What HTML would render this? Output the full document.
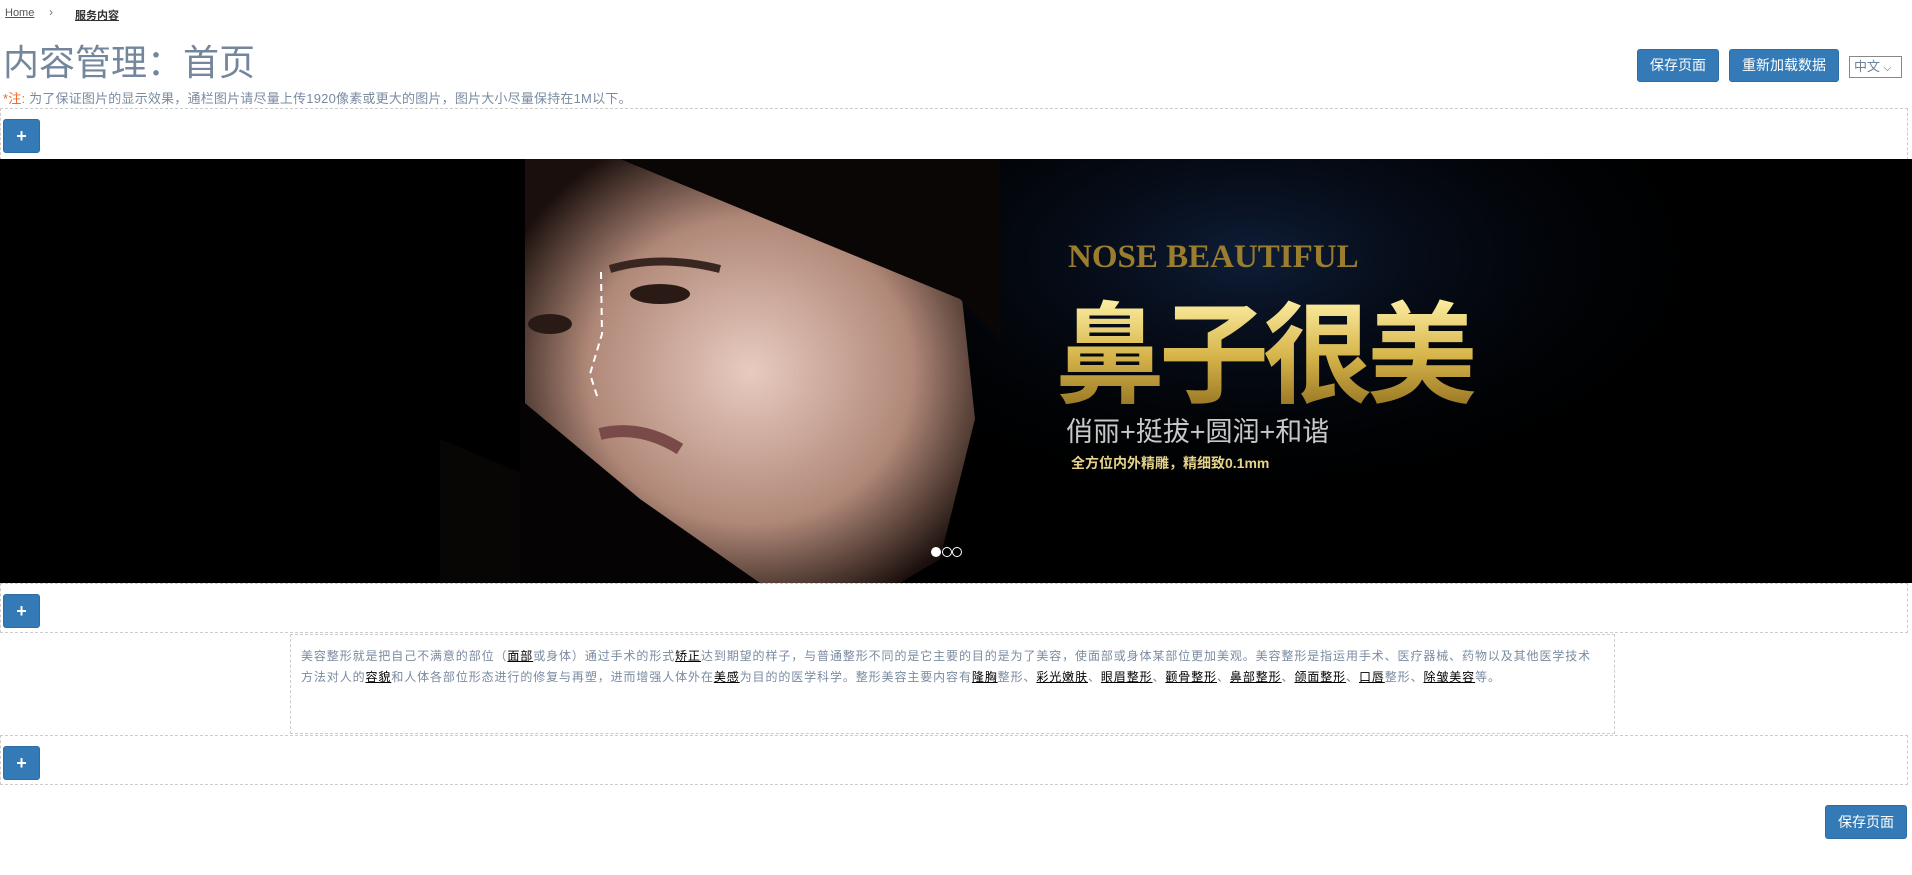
<!DOCTYPE html>
<html><head><meta charset="utf-8"><style>
*{box-sizing:border-box;margin:0;padding:0}
body{width:1912px;height:875px;background:#fff;font-family:"Liberation Sans","Noto Sans CJK SC",sans-serif;position:relative;overflow:hidden}
.a{position:absolute}
.btn{position:absolute;background:#337ab7;border:1px solid #2e6da4;border-radius:3px;color:#fff;font-size:14px;text-align:center}
.plus{width:37px;height:34px;line-height:32px;font-size:18px;font-weight:bold}
.sec{position:absolute;left:0;width:1908px;border:1px dashed #ccc}
.txt{font-size:12px;color:#7a8ba0;line-height:21px;letter-spacing:0.9px;white-space:nowrap}
.txt u{color:#000}
</style></head><body>
<div class="a" style="left:5px;top:7px;font-size:11px;color:#555"><u>Home</u></div>
<div class="a" style="left:49px;top:5px;font-size:12px;color:#777">›</div>
<div class="a" style="left:75px;top:7px;font-size:11px;color:#333;font-weight:bold"><u>服务内容</u></div>
<div class="a" style="left:3px;top:39px;font-size:36px;color:#73869c;line-height:48px">内容管理：首页</div>
<div class="a" style="left:3px;top:88px;font-size:13px;color:#7a8ba0;letter-spacing:0.2px"><span style="color:#f36a21">*注:</span> 为了保证图片的显示效果，通栏图片请尽量上传1920像素或更大的图片，图片大小尽量保持在1M以下。</div>
<div class="btn" style="left:1637px;top:49px;width:82px;height:33px;line-height:31px">保存页面</div>
<div class="btn" style="left:1729px;top:49px;width:110px;height:33px;line-height:31px">重新加载数据</div>
<div class="a" style="left:1849px;top:56px;width:53px;height:22px;border:1px solid #888;font-size:13px;color:#6f8196;line-height:20px;padding-left:4px">中文 <span style="color:#555;font-size:10px">⌵</span></div>

<div class="sec" style="top:108px;height:52px"></div>
<div class="btn plus" style="left:3px;top:119px">+</div>

<svg class="a" style="left:0;top:159px" width="1912" height="424" viewBox="0 0 1912 424">
<defs>
<radialGradient id="sky" cx="0.5" cy="0.4" r="0.5"><stop offset="0" stop-color="#0e1d38"/><stop offset="1" stop-color="#000" stop-opacity="0"/></radialGradient>
<radialGradient id="skin" cx="0.5" cy="0.5" r="0.6"><stop offset="0" stop-color="#e8cbc0"/><stop offset="0.6" stop-color="#b08878"/><stop offset="1" stop-color="#1a0f0c"/></radialGradient>
<linearGradient id="gold" x1="0" y1="0" x2="0" y2="1"><stop offset="0" stop-color="#fff2a8"/><stop offset="0.5" stop-color="#d6b44a"/><stop offset="1" stop-color="#8b6a1c"/></linearGradient>
</defs>
<rect width="1912" height="424" fill="#000"/>
<ellipse cx="1250" cy="150" rx="500" ry="260" fill="url(#sky)"/>
<path d="M525 0 L900 0 L960 120 L975 260 L940 400 L900 424 L700 424 L600 380 L525 300 Z" fill="url(#skin)"/>
<path d="M620 0 L1000 0 L1000 180 L960 140 Z" fill="#0a0606"/>
<path d="M440 280 L560 330 L700 390 L760 424 L440 424 Z" fill="#080505"/>
<path d="M520 240 L640 340 L760 424 L520 424 Z" fill="#050303"/>
<ellipse cx="660" cy="135" rx="30" ry="10" fill="#2a1a16"/>
<ellipse cx="550" cy="165" rx="22" ry="10" fill="#2a1a16"/>
<path d="M610 110 Q660 95 720 110" stroke="#3a2620" stroke-width="8" fill="none"/>
<path d="M600 275 Q640 265 680 290" stroke="#7a4a48" stroke-width="12" fill="none"/>
<path d="M601 113 L602 175 L590 215 L598 240" stroke="#fff" stroke-width="2" stroke-dasharray="7 5" fill="none"/>
<text x="1068" y="108" font-family="Liberation Serif,serif" font-weight="bold" font-size="33" fill="#9b7d2e">NOSE BEAUTIFUL</text>
<text x="1055" y="235" font-family="Liberation Sans,'Noto Sans CJK SC',sans-serif" font-weight="bold" font-size="110" fill="url(#gold)" letter-spacing="-6">鼻子很美</text>
<text x="1066" y="282" font-family="Liberation Sans,'Noto Sans CJK SC',sans-serif" font-size="27" fill="#c8c8c8">俏丽+挺拔+圆润+和谐</text>
<text x="1071" y="309" font-family="Liberation Sans,'Noto Sans CJK SC',sans-serif" font-weight="bold" font-size="14" fill="#e6d38a">全方位内外精雕，精细致0.1mm</text>
<circle cx="936" cy="393" r="5" fill="#fff"/>
<circle cx="947" cy="393" r="4.5" fill="none" stroke="#fff" stroke-width="1"/>
<circle cx="957" cy="393" r="4.5" fill="none" stroke="#fff" stroke-width="1"/>
</svg>

<div class="sec" style="top:583px;height:50px"></div>
<div class="btn plus" style="left:3px;top:594px">+</div>
<div class="a" style="left:290px;top:634px;width:1325px;height:100px;border:1px dashed #ccc;padding:11px 10px;overflow:hidden" >
<div class="txt">美容整形就是把自己不满意的部位（<u>面部</u>或身体）通过手术的形式<u>矫正</u>达到期望的样子，与普通整形不同的是它主要的目的是为了美容，使面部或身体某部位更加美观。美容整形是指运用手术、医疗器械、药物以及其他医学技术<br>方法对人的<u>容貌</u>和人体各部位形态进行的修复与再塑，进而增强人体外在<u>美感</u>为目的的医学科学。整形美容主要内容有<u>隆胸</u>整形、<u>彩光嫩肤</u>、<u>眼眉整形</u>、<u>颧骨整形</u>、<u>鼻部整形</u>、<u>颌面整形</u>、<u>口唇</u>整形、<u>除皱美容</u>等。</div>
</div>
<div class="sec" style="top:735px;height:50px"></div>
<div class="btn plus" style="left:3px;top:746px">+</div>
<div class="btn" style="left:1825px;top:805px;width:82px;height:34px;line-height:32px">保存页面</div>
</body></html>
